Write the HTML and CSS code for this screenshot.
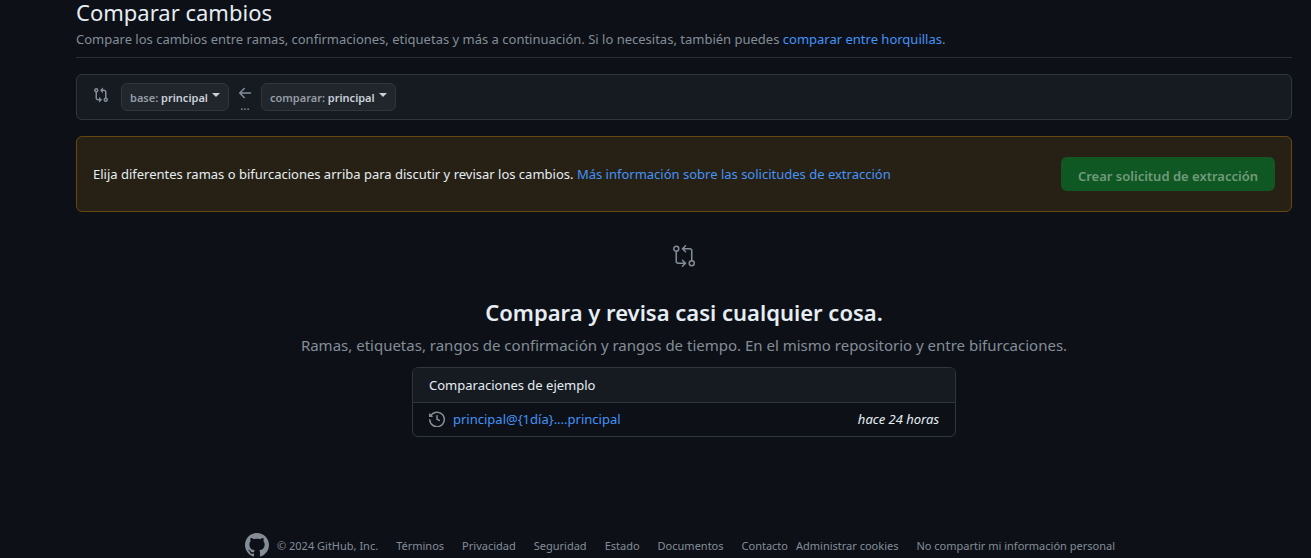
FILE: index.html
```html
<!DOCTYPE html>
<html lang="es">
<head>
<meta charset="utf-8">
<meta name="viewport" content="width=device-width, initial-scale=1">
<title>Comparar cambios</title>
<link rel="stylesheet" href="styles.css">
</head>
<body>
<svg class="sprite" aria-hidden="true">
  <symbol id="compare-small" viewBox="0 0 16 16">
    <g fill="none" stroke="currentColor" stroke-width="1.5">
      <circle cx="3.25" cy="3.25" r="1.5"/><circle cx="12.75" cy="12.75" r="1.5"/>
      <path d="M3.25 5v6A1.75 1.75 0 0 0 5 12.75h2M12.75 11V5A1.75 1.75 0 0 0 11 3.25H9"/>
    </g>
    <path fill="currentColor" d="M9.57.68A.25.25 0 0 1 10 .85v4.8a.25.25 0 0 1-.43.17L7.18 3.43a.25.25 0 0 1 0-.36zM6.43 15.32a.25.25 0 0 1-.43-.17v-4.8a.25.25 0 0 1 .43-.17l2.39 2.39a.25.25 0 0 1 0 .36z"/>
  </symbol>
  <symbol id="compare-large" viewBox="0 0 24 24">
    <g fill="none" stroke="currentColor" stroke-width="1.5" stroke-linecap="round" stroke-linejoin="round">
      <circle cx="4.25" cy="4.75" r="2.5"/><circle cx="19.75" cy="19.25" r="2.5"/>
      <path d="M4.25 7.25v10a2 2 0 0 0 2 2h7M10.5 16.25l3 3-3 3M19.75 16.75v-10a2 2 0 0 0-2-2h-7M13.5 1.75l-3 3 3 3"/>
    </g>
  </symbol>
</svg>
<main class="page">
  <header class="heading">
    <h1 class="title">Comparar cambios</h1>
    <p class="subtitle">Compare los cambios entre ramas, confirmaciones, etiquetas y más a continuación. Si lo necesitas, también puedes <a class="link" href="#">comparar entre horquillas</a>.</p>
  </header>

  <section class="range" aria-label="Ramas">
    <svg class="icon range-icon" aria-hidden="true"><use href="#compare-small"/></svg>
    <button class="branch" type="button"><span>base: <b class="branch-name">principal</b></span><i class="caret"></i></button>
    <span class="arrow">
      <svg class="icon" viewBox="0 0 16 16" aria-hidden="true"><path d="M7.25 3.5L2.75 8l4.5 4.5M3 8h10.5" fill="none" stroke="currentColor" stroke-width="1.5" stroke-linecap="round" stroke-linejoin="round"/></svg>
      <span class="dots">...</span>
    </span>
    <button class="branch" type="button"><span>comparar: <b class="branch-name">principal</b></span><i class="caret"></i></button>
  </section>

  <section class="notice">
    <p class="notice-text">Elija diferentes ramas o bifurcaciones arriba para discutir y revisar los cambios. <a class="link" href="#">Más información sobre las solicitudes de extracción</a></p>
    <button class="create" type="button" disabled>Crear solicitud de extracción</button>
  </section>

  <section class="blank">
    <svg class="icon-large" aria-hidden="true"><use href="#compare-large"/></svg>
    <h2 class="blank-title">Compara y revisa casi cualquier cosa.</h2>
    <p class="blank-text">Ramas, etiquetas, rangos de confirmación y rangos de tiempo. En el mismo repositorio y entre bifurcaciones.</p>
    <div class="examples">
      <h3 class="examples-title">Comparaciones de ejemplo</h3>
      <div class="example">
        <svg class="icon" viewBox="0 0 16 16" aria-hidden="true"><g fill="none" stroke="currentColor" stroke-width="1.5" stroke-linecap="round"><path d="M1.7 4.9A7.25 7.25 0 1 1 .8 8.7"/><path d="M8 4.75v3.5l2.3 1.2" stroke-linejoin="round"/></g><path fill="currentColor" d="M0 2.5v3.25c0 .14.11.25.25.25H3.6a.25.25 0 0 0 .18-.43L.43 2.3A.25.25 0 0 0 0 2.5z"/></svg>
        <a class="link" href="#">principal@{1día}....principal</a>
        <em class="when">hace 24 horas</em>
      </div>
    </div>
  </section>
</main>
<footer class="footer">
  <svg class="icon-large" viewBox="0 0 16 16" role="img" aria-label="GitHub"><path fill="currentColor" d="M8 0C3.58 0 0 3.58 0 8c0 3.54 2.29 6.53 5.47 7.59.4.07.55-.17.55-.38 0-.19-.01-.82-.01-1.49-2.01.37-2.53-.49-2.69-.94-.09-.23-.48-.94-.82-1.13-.28-.15-.68-.52-.01-.53.63-.01 1.08.58 1.23.82.72 1.21 1.87.87 2.33.66.07-.52.28-.87.51-1.07-1.78-.2-3.64-.89-3.64-3.95 0-.87.31-1.59.82-2.15-.08-.2-.36-1.02.08-2.12 0 0 .67-.21 2.2.82.64-.18 1.32-.27 2-.27s1.36.09 2 .27c1.53-1.04 2.2-.82 2.2-.82.44 1.1.16 1.92.08 2.12.51.56.82 1.27.82 2.15 0 3.07-1.87 3.75-3.65 3.95.29.25.54.73.54 1.48 0 1.07-.01 1.93-.01 2.2 0 .21.15.46.55.38A8.01 8.01 0 0 0 16 8c0-4.42-3.58-8-8-8z"/></svg>
  <span class="copyright">© 2024 GitHub, Inc.</span>
  <nav class="footer-links">
    <a class="footer-link" href="#">Términos</a>
    <a class="footer-link" href="#">Privacidad</a>
    <a class="footer-link" href="#">Seguridad</a>
    <a class="footer-link" href="#">Estado</a>
    <a class="footer-link" href="#">Documentos</a>
    <span class="footer-pair"><a class="footer-link" href="#">Contacto</a><button class="footer-link" type="button">Administrar cookies</button></span>
    <button class="footer-link" type="button">No compartir mi información personal</button>
  </nav>
</footer>
</body>
</html>
```
FILE: styles.css
```css
* { box-sizing: border-box; }
body {
  margin: 0;
  background: #0d1117;
  color: #e6edf3;
  font-family: "Noto Sans", "Open Sans", sans-serif;
  font-size: 13px;
  line-height: 20px;
}
h1, h2, h3, p { margin: 0; }
button { font-family: inherit; }
.sprite { display: none; }
.icon { width: 16px; height: 16px; flex: none; color: #848d97; }
.icon-large { width: 24px; height: 24px; flex: none; color: #848d97; }
.link { color: #4493f8; text-decoration: none; }

.page { padding: 0 19px 0 76px; }
.heading { padding-bottom: 8px; border-bottom: 1px solid #282e36; }
.title { font-size: 22px; line-height: 24px; font-weight: 400; }
.subtitle { padding-top: 5px; color: #848d97; }

.range {
  display: flex;
  align-items: center;
  gap: 8px;
  margin-top: 16px;
  padding: 8px 16px;
  min-height: 46px;
  background: #161b22;
  border: 1px solid #30363d;
  border-radius: 6px;
}
.range-icon { margin: 0 4px 4px 0; }
.branch {
  display: flex;
  align-items: center;
  gap: 4px;
  height: 28px;
  padding: 0 8px;
  background: #21262d;
  border: 1px solid #30363d;
  border-radius: 6px;
  color: #959ca4;
  font-size: 11px;
  font-weight: 600;
}
.branch-name { color: #c9d1d9; font-weight: 600; }
.caret {
  border: 4px solid transparent;
  border-top-color: #c9d1d9;
  border-bottom: 0;
  margin-bottom: 4px;
}
.arrow { display: flex; flex-direction: column; align-items: center; padding-top: 2px; color: #848d97; }
.dots { font-size: 12px; line-height: 10px; }

.notice {
  display: flex;
  align-items: center;
  justify-content: space-between;
  gap: 16px;
  margin-top: 16px;
  padding: 20px 16px;
  background: #272115;
  border: 1px solid #654811;
  border-radius: 6px;
}
.create {
  min-height: 34px;
  padding: 4px 17px 0;
  background: #105823;
  border: 0;
  border-radius: 6px;
  color: #6f9b7a;
  font-size: 13px;
  font-weight: 600;
}

.blank {
  display: flex;
  flex-direction: column;
  align-items: center;
  padding-top: 32px;
  text-align: center;
}
.blank-title { margin-top: 28px; font-size: 22px; line-height: 32px; font-weight: 600; }
.blank-text { margin-top: 5px; color: #848d97; font-size: 15px; line-height: 24px; }
.examples {
  width: 100%;
  max-width: 544px;
  margin-top: 10px;
  border: 1px solid #30363d;
  border-radius: 6px;
  overflow: hidden;
  text-align: left;
}
.examples-title {
  padding: 7px 16px;
  background: #161b22;
  border-bottom: 1px solid #30363d;
  font-size: 13px;
  font-weight: 400;
}
.example { display: flex; align-items: center; gap: 8px; padding: 6px 16px 7px; }
.when { margin-left: auto; }

.footer {
  display: flex;
  justify-content: center;
  align-items: center;
  gap: 8px;
  padding: 96px 0 0 49px;
  color: #848d97;
  font-size: 11px;
}
.copyright, .footer-links { padding-top: 2px; }
.footer-links { display: flex; flex-wrap: wrap; gap: 18px; padding-left: 10px; }
.footer-pair { display: flex; gap: 8px; }
.footer-link {
  padding: 0;
  background: none;
  border: 0;
  color: #848d97;
  font-size: 11px;
  line-height: 20px;
  text-decoration: none;
}
```
